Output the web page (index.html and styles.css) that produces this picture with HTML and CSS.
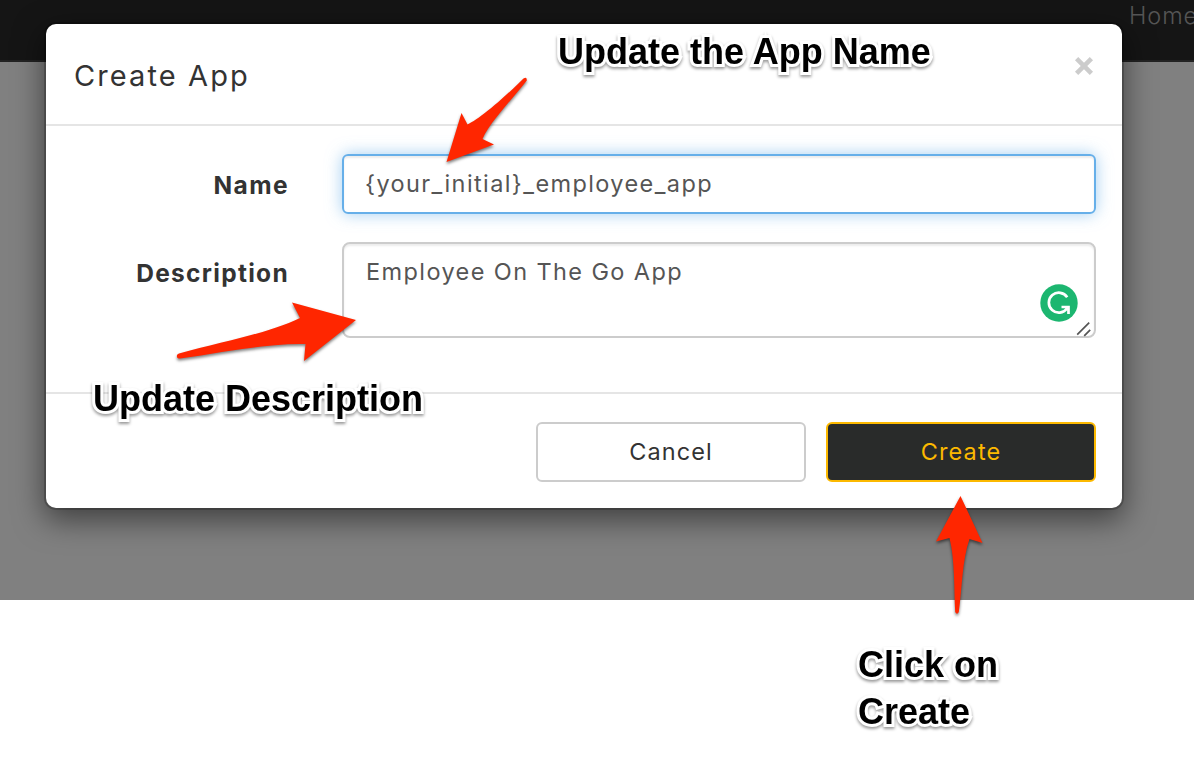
FILE: index.html
```html
<!DOCTYPE html>
<html lang="en">
<head>
<meta charset="utf-8">
<title>Create App</title>
<link rel="stylesheet" href="styles.css">
</head>
<body>
<div class="page">
  <nav class="navbar"><a class="nav-link">Home</a></nav>
</div>
<section class="modal">
  <header class="modal-header">
    <h1 class="modal-title"><span class="t-title">Create App</span></h1>
    <svg class="close" viewBox="0 0 20 20"><path d="M2.6 2.6L17.4 17.4M17.4 2.6L2.6 17.4"/></svg>
  </header>
  <div class="modal-body">
    <div class="row">
      <label class="label"><span class="t-name">Name</span></label>
      <div class="field field-focus"><span class="t-input">{your_initial}_employee_app</span></div>
    </div>
    <div class="row">
      <label class="label"><span class="t-desc">Description</span></label>
      <div class="field field-area"><span class="t-area">Employee On The Go App</span>
        <svg class="badge" viewBox="0 0 38 38"><circle cx="19" cy="19" r="18.7" fill="#1cb670"/><path d="M27.2 13.2A10 10 0 1 0 27 24.5L28.3 23M21.5 23H28.5V30" fill="none" stroke="#fff" stroke-width="2.7"/></svg>
        <svg class="grip" viewBox="0 0 16 16"><path d="M1.2 13.6L13.2 1.6M8.2 14.8L14.2 8.8" stroke="#555" stroke-width="1.7"/></svg>
      </div>
    </div>
  </div>
  <footer class="modal-footer">
    <button class="btn"><span class="t-cancel">Cancel</span></button>
    <button class="btn btn-primary"><span class="t-create">Create</span></button>
  </footer>
</section>
<svg class="arrows" viewBox="0 0 1194 784">
  <path d="M446.500 162L461.500 113L467.500 124.500C478 120 502 100 523.500 78.500Q527 76.500 526.800 80.500C510 102 490 122 482.500 139L494 144.500Z"/>
  <path d="M356 320L304 361L305.500 344C270 343 225 352 180 358.500C176 358.500 176 354.500 179 353.500C220 342 270 333 300 318L292 302.500Z"/>
  <path d="M960.500 496L982.500 543L969.500 539C962 560 962 590 958.800 612Q957 615.500 955.200 612C954 590 955 560 949.500 538L936 541.500Z"/>
</svg>
<div class="note note-name">Update the App Name</div>
<div class="note note-desc">Update Description</div>
<div class="note note-click">Click on<br>Create</div>
</body>
</html>
```
FILE: styles.css
```css
* { box-sizing: border-box; }
body {
  position: relative;
  margin: 0;
  width: 1194px;
  height: 784px;
  overflow: hidden;
  background: #fff;
  color: #333;
  font: 23.5px/30px Inter, "Liberation Sans", sans-serif;
}
.page { height: 600px; background: #808080; }
.navbar {
  height: 62px;
  padding-left: 1129px;
  background: #151515;
  border-bottom: 2px solid #232323;
  overflow: hidden;
  white-space: nowrap;
}
.nav-link { color: #555; line-height: 32px; letter-spacing: .9px; font-weight: 300; }
.modal {
  position: absolute;
  left: 46px;
  top: 24px;
  width: 1076px;
  height: 484px;
  display: flex;
  flex-direction: column;
  border-radius: 10px;
  background: #fff;
  box-shadow: 0 0 0 2px rgba(0, 0, 0, .2), 0 10px 30px 2px rgba(0, 0, 0, .5);
}
.modal-header {
  height: 102px;
  padding: 32px 28px 0;
  display: flex;
  justify-content: space-between;
  border-bottom: 2px solid #e5e5e5;
}
.modal-title { margin: 0; font-size: 29px; line-height: 40px; font-weight: 400; }
.close { width: 20px; height: 20px; stroke: #ccc; stroke-width: 4.6; }
.modal-body {
  height: 266px;
  padding: 28px 26px 0 0;
  display: flex;
  flex-direction: column;
  gap: 28px;
}
.row { display: flex; gap: 54px; }
.label { width: 242px; padding-top: 16px; text-align: right; font-weight: 700; font-size: 24.5px; }
.field {
  width: 754px;
  height: 60px;
  padding: 13px 22px 13px 21px;
  border: 2px solid #ccc;
  border-radius: 6px;
  color: #555;
  box-shadow: inset 0 2px 2px rgba(0, 0, 0, .075);
}
.field-focus {
  border-color: #66afe9;
  box-shadow: inset 0 2px 2px rgba(0, 0, 0, .075), 0 0 16px rgba(102, 175, 233, .6);
}
.field-area { position: relative; height: 96px; padding-left: 22px; border-radius: 8px; }
.badge { position: absolute; right: 16px; top: 40px; width: 38px; height: 38px; }
.grip { position: absolute; right: 2px; bottom: -1px; width: 16px; height: 16px; }
.modal-footer {
  padding: 28px 26px 0;
  display: flex;
  justify-content: flex-end;
  gap: 20px;
}
.modal-body { border-bottom: 2px solid #e5e5e5; height: 268px; }
.btn {
  width: 270px;
  height: 60px;
  padding: 0;
  border: 2px solid #ccc;
  border-radius: 6px;
  background: #fff;
  color: #333;
  font: inherit;
}
.btn-primary { background: #292b2a; border-color: #fcb900; color: #fcb900; }
.t-title { letter-spacing: 2.1px; }
.t-input { letter-spacing: 1.4px; }
.t-area { letter-spacing: 1.4px; }
.t-name { letter-spacing: 1.4px; margin-right: -1px; }
.t-desc { letter-spacing: 1.3px; margin-right: -1px; }
.t-cancel, .t-create { letter-spacing: 1.1px; }
.arrows {
  position: absolute;
  inset: 0;
  width: 1194px;
  height: 784px;
  fill: #ff2600;
  filter: drop-shadow(0 2px 1.5px rgba(0, 0, 0, .5));
}
.note {
  position: absolute;
  color: #000;
  font: 700 36px/47px "Liberation Sans", Arial, sans-serif;
  white-space: nowrap;
  -webkit-text-stroke: 6px #fff;
  paint-order: stroke fill;
  stroke-linejoin: round;
  filter: drop-shadow(0 2px 1.5px rgba(0, 0, 0, .4));
}
.note-name { left: 558px; top: 28px; }
.note-desc { left: 93px; top: 375px; }
.note-click { left: 858px; top: 641px; }
```
